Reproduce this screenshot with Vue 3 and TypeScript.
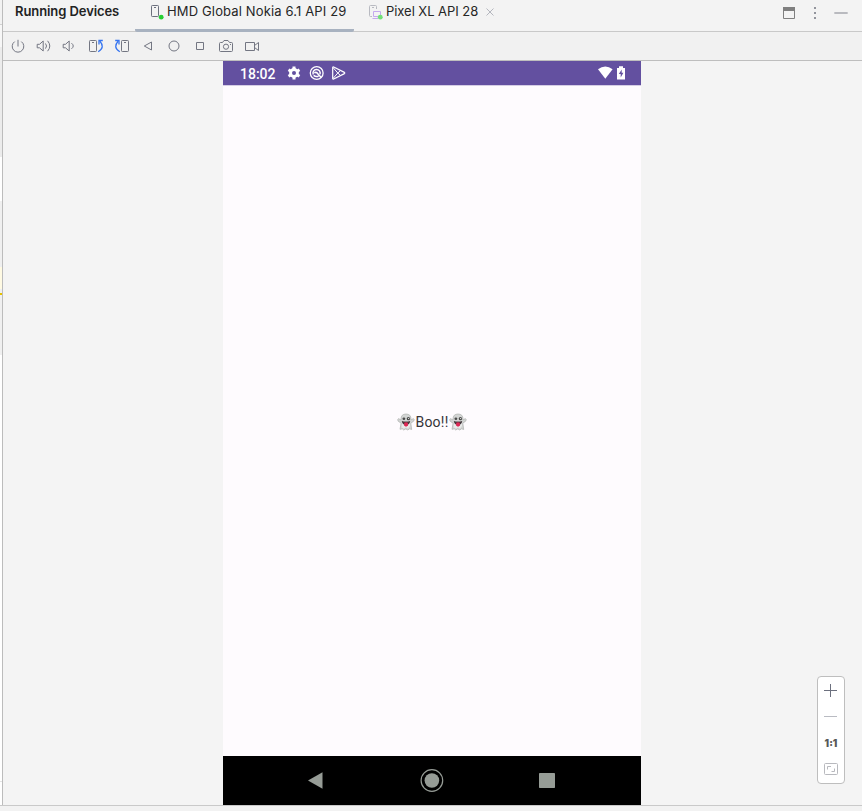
<script setup lang="ts">
import { ref } from 'vue'

interface Tool {
  name: string
  paths: string[]
  accent?: string[]
}

const tools: Tool[] = [
  { name: 'Power', paths: ['M9.7 9.6A5.8 5.8 0 1 0 16.3 9.6', 'M13 7.8V14.5'] },
  {
    name: 'Volume Up',
    paths: ['M6.2 12.3H8.5L12.2 9V19L8.5 15.8H6.2Z', 'M14.5 11.5Q16.6 14 14.5 16.6', 'M16.6 8.8Q21 14 16.6 19.2'],
  },
  { name: 'Volume Down', paths: ['M6.2 12.3H8.5L12.2 9V19L8.5 15.8H6.2Z', 'M14.5 11.2Q18 14 14.5 16.8'] },
  {
    name: 'Rotate Left',
    paths: ['M7.3 8.5H12.7Q13.5 8.5 13.5 9.3V18.7Q13.5 19.5 12.7 19.5H7.3Q6.5 19.5 6.5 18.7V9.3Q6.5 8.5 7.3 8.5Z', 'M9 10.5H11'],
    accent: ['M15.2 19.8Q22.5 15.5 16.8 9', 'M19.8 8.5H16V12.5'],
  },
  {
    name: 'Rotate Right',
    paths: ['M13.3 8.5H18.7Q19.5 8.5 19.5 9.3V18.7Q19.5 19.5 18.7 19.5H13.3Q12.5 19.5 12.5 18.7V9.3Q12.5 8.5 13.3 8.5Z', 'M15 10.5H17'],
    accent: ['M10.8 19.8Q3.5 15.5 9.2 9', 'M6.2 8.5H10V12.5'],
  },
  { name: 'Back', paths: ['M16.5 10V18L9.3 14Z'] },
  { name: 'Home', paths: ['M18 14A5 5 0 1 1 8 14A5 5 0 1 1 18 14Z'] },
  { name: 'Overview', paths: ['M9.5 10.5H16.5V17.5H9.5Z'] },
  {
    name: 'Screenshot',
    paths: [
      'M7.5 10.5H9.5L11 8.5H15L16.5 10.5H18.5Q19.5 10.5 19.5 11.5V18.5Q19.5 19.5 18.5 19.5H7.5Q6.5 19.5 6.5 18.5V11.5Q6.5 10.5 7.5 10.5Z',
      'M15.6 14.7A2.6 2.6 0 1 1 10.4 14.7A2.6 2.6 0 1 1 15.6 14.7Z',
      'M17 12.5H18',
    ],
  },
  { name: 'Record', paths: ['M6.5 10.5H15.5V18.5H6.5Z', 'M15.5 13.5L19.5 10.5V18.5L15.5 15.5'] },
]

const selected = ref<number>(0)
</script>

<template>
  <div class="window">
    <div class="workspace">
      <div class="gutter">
        <i class="g-head"></i><i class="g-a"></i><i class="g-b"></i><i class="g-c"></i>
        <i class="g-d"></i><i class="g-e"></i><i class="g-f"></i><i class="g-g"></i>
        <i class="g-h"></i><i class="g-i"></i>
      </div>
      <main class="panel">
        <header class="header">
          <span class="title">Running Devices</span>
          <button class="tab first" :class="{ active: selected === 0 }" @click="selected = 0">
            <svg class="device-icon" width="16" height="18" viewBox="0 0 16 18" fill="none">
              <path d="M4.3 3.5H9.7Q10.5 3.5 10.5 4.3V13.7Q10.5 14.5 9.7 14.5H4.3Q3.5 14.5 3.5 13.7V4.3Q3.5 3.5 4.3 3.5Z" stroke="#6c707e" />
              <path d="M6 5.5H8" stroke="#6c707e" />
              <circle cx="13.2" cy="15.2" r="2.4" fill="#27cf32" />
            </svg>
            <span class="label-a">HMD Global Nokia 6.1 API 29</span>
          </button>
          <button class="tab second" :class="{ active: selected === 1 }" @click="selected = 1">
            <svg class="device-icon" width="16" height="18" viewBox="0 0 16 18" fill="none">
              <path d="M4 14.5H2.5Q1.5 14.5 1.5 13.5V4.5Q1.5 3.5 2.5 3.5H7.5Q8.5 3.5 8.5 4.5V7" stroke="#b8bac1" />
              <path d="M4 5.5H6" stroke="#b8bac1" />
              <path d="M5.5 9.5H12.5V14.5H5.5ZM4.5 16.5H10" stroke="#c5a9ee" />
              <circle cx="12.3" cy="15.2" r="2.4" fill="#72df78" />
            </svg>
            <span class="label-b">Pixel XL API 28</span>
            <svg class="close" width="8" height="8" viewBox="0 0 8 8"><path d="M.5 .5L7.5 7.5M7.5 .5L.5 7.5" stroke="#b4b6be" /></svg>
          </button>
          <div class="window-actions">
            <svg width="68" height="14" viewBox="0 0 68 14" fill="none">
              <path d="M1.5 1.5H12.5V12.5H1.5Z" stroke="#7f7f7f" />
              <path d="M1 1H13V5H1Z" fill="#7f7f7f" />
              <path d="M32 1H34V3H32ZM32 6H34V8H32ZM32 11H34V13H32Z" fill="#92949c" />
              <path d="M52.3 6H65.7V8H52.3Z" fill="#b9babf" />
            </svg>
          </div>
        </header>
        <nav class="toolbar">
          <svg v-for="tool in tools" :key="tool.name" class="tool" viewBox="0 0 26 28" :aria-label="tool.name">
            <path v-for="d in tool.paths" :key="d" :d="d" />
            <path v-for="d in tool.accent ?? []" :key="d" :d="d" class="accent" />
          </svg>
        </nav>
        <section class="stage">
          <div class="device">
            <div class="status">
              <span class="clock">18:02</span>
              <svg class="notifications" width="60" height="16" viewBox="0 0 60 16" fill="none">
                <path d="M7 1.5V14.5M1.5 4.8L12.5 11.2M12.5 4.8L1.5 11.2" stroke="#fff" stroke-width="3" />
                <circle cx="7" cy="8" r="3.4" stroke="#fff" stroke-width="3" />
                <circle cx="7" cy="8" r="2" fill="#6350a0" />
                <circle cx="29.7" cy="8" r="6.4" stroke="#fff" stroke-width="1.3" />
                <path d="M26.3 9.5A3.6 3.6 0 1 1 33 9.2M27.3 7.8Q29.5 6.5 31 9L34.2 12.5M26.6 10.3Q29 12.3 31.6 11.1" stroke="#fff" stroke-width="1.5" />
                <path d="M45.7 2.7Q45.7 1.5 46.7 2L57.4 7.4Q58.2 8 57.4 8.6L46.7 14Q45.7 14.5 45.7 13.3Z" stroke="#fff" stroke-width="1.2" stroke-linejoin="round" />
                <path d="M46 2.5L50.8 8L46 13.5M50.8 8L53.4 5.6M50.8 8L53.4 10.4" stroke="#fff" stroke-width="1" />
              </svg>
              <svg class="signals" width="30" height="16" viewBox="0 0 30 16">
                <path d="M0 4.2Q7.3 -1.4 14.6 4.2L7.3 13.8Z" fill="#fff" />
                <path d="M19 3H21V1.3H25V3H27V14.5H19Z" fill="#fff" />
                <path d="M23.7 4.5L20.8 9H22.7V12.5L25.4 7.8H23.7Z" fill="#6350a0" />
              </svg>
            </div>
            <div class="app">
              <div class="greeting">
                <svg v-for="side in 2" :key="side" :class="['ghost', side === 1 ? 'left' : 'right']" width="18" height="18" viewBox="0 0 18 18">
                  <path d="M4 6Q4 1 9 1Q14 1 14 6V7L16.4 5.6Q18 6.6 16.6 8.2L13.8 10.2L14.7 16.5L12.5 15.8L10.8 17L8.8 15.9L6.7 17L5.3 15.8L3 16.3L4.1 10.2L1.2 8.2Q0 6.6 1.5 5.6L4 7Z" fill="#d3d5d4" stroke="#adb0ae" stroke-width=".7" />
                  <path d="M5 8.5H13V13L11 15.5L9 14.5L7 15.5L4.7 14.5Z" fill="#e9e9e9" />
                  <ellipse cx="6.9" cy="5.8" rx="1.4" ry="1.3" fill="#4b4b4b" />
                  <ellipse cx="11.4" cy="5.7" rx="1.7" ry="1.6" fill="#4b4b4b" />
                  <circle cx="11.6" cy="5.5" r=".6" fill="#eee" />
                  <path d="M4.8 7.9Q9 9 13.2 7.9Q12.8 11.8 9 11.8Q5.3 11.8 4.8 7.9Z" fill="#44383c" />
                  <path d="M7.2 9.8Q9 8.8 10.9 9.8V12.3Q9 15 7.2 12.3Z" fill="#df2855" />
                </svg>
                <span class="boo">Boo!!</span>
              </div>
            </div>
            <div class="navigation">
              <svg width="418" height="49" viewBox="0 0 418 49">
                <path d="M85 24.5L99.5 16.2V32.8Z" fill="#969c96" />
                <circle cx="208.9" cy="24.5" r="10.8" fill="none" stroke="#969c96" stroke-width="1.2" />
                <circle cx="208.9" cy="24.5" r="7.3" fill="#969c96" />
                <rect x="316" y="17" width="16" height="15" rx=".7" fill="#969c96" />
              </svg>
            </div>
          </div>
          <div class="zoom">
            <svg width="26" height="26" viewBox="0 0 26 26"><path d="M6 13.5H19M12.5 7V20" stroke="#6c707e" /></svg>
            <svg width="26" height="26" viewBox="0 0 26 26"><path d="M6 13.5H19" stroke="#b9bbc2" /></svg>
            <span class="ratio">1:1</span>
            <svg width="26" height="26" viewBox="0 0 26 26" fill="none" stroke="#b8b9be"><rect x="6.5" y="8.5" width="13" height="11" rx="1" /><path d="M9.5 14.5V11.5H13M13.5 16.5H16.5V13.5" /></svg>
          </div>
        </section>
      </main>
    </div>
    <footer class="footer"></footer>
  </div>
</template>

<style>
body {
  margin: 0;
  overflow: hidden;
}
</style>

<style scoped>
.window {
  display: flex;
  flex-direction: column;
  width: 862px;
  height: 811px;
  background: #f2f2f2;
  font-family: Inter, sans-serif;
}
.workspace {
  display: flex;
  height: 805px;
}
.gutter {
  display: flex;
  flex-direction: column;
  width: 2px;
  background: #fff;
}
.gutter i { flex: none; }
.g-head { height: 24px; background: #f2f2f2; border-bottom: 1px solid #d1d1d1; }
.g-a { height: 22px; background: #f7f7f7; }
.g-b { height: 110px; background: #ececec; }
.g-c { height: 44px; background: #fff; }
.g-d { height: 66px; background: #f0f0f0; }
.g-e { height: 22px; background: #fffae3; }
.g-f { height: 4px; background: #f0f0f0; }
.g-g { height: 2px; background: #e6c200; }
.g-h { height: 60px; background: #f0f0f0; }
.g-i { height: 426px; border-bottom: 1px solid #e4e4e4; }
.panel {
  display: flex;
  flex: 1;
  flex-direction: column;
  border-left: 1px solid #bcbcbc;
}
.header {
  display: flex;
  height: 31px;
  box-sizing: content-box;
  background: #f3f3f3;
  border-bottom: 1px solid #c9c9c9;
}
.title {
  width: 120px;
  padding-left: 12px;
  font-size: 13px;
  font-weight: 600;
  line-height: 23px;
  letter-spacing: -.08px;
  color: #222;
  white-space: nowrap;
}
.tab {
  display: flex;
  box-sizing: border-box;
  height: 32px;
  padding: 0;
  font: 13px/23px Inter, sans-serif;
  color: #262626;
  white-space: nowrap;
  background: none;
  border: 0;
  border-bottom: 3px solid transparent;
}
.tab.active {
  border-bottom-color: #a8b2c0;
  border-radius: 2px;
}
.first { width: 219px; padding-left: 13px; }
.second { padding-left: 14px; }
.device-icon { flex: none; margin-top: 2px; margin-right: 3px; }
.second .device-icon { margin-right: 2px; }
.label-a { letter-spacing: .14px; }
.label-b { letter-spacing: -.05px; }
.close { margin-top: 8px; margin-left: 8px; }
.window-actions { margin-top: 4px; margin-right: 12px; margin-left: auto; }
.toolbar {
  display: flex;
  height: 28px;
  padding-left: 2px;
  background: #f1f1f1;
  border-bottom: 1px solid #bebebe;
}
.tool {
  width: 26px;
  height: 28px;
  fill: none;
  stroke: #737682;
}
.accent { stroke: #3574f0; stroke-width: 1.3; }
.stage {
  display: flex;
  flex: 1;
  background: #f4f4f4;
}
.device {
  display: flex;
  flex-direction: column;
  width: 418px;
  margin-left: 220px;
}
.status {
  display: flex;
  align-items: center;
  height: 24px;
  color: #fff;
  background: #6350a0;
  border-bottom: 1px solid #d5cde5;
}
.clock {
  width: 47px;
  padding-top: 2px;
  padding-left: 17px;
  font: 500 14px/22px Roboto, sans-serif;
}
.signals { margin-right: 13px; margin-left: auto; }
.app {
  display: flex;
  flex: 1;
  align-items: center;
  justify-content: center;
  background: #fefbfe;
}
.greeting {
  display: flex;
  align-items: center;
  color: #353338;
  font: 14px/20px Roboto, sans-serif;
}
.boo { order: 1; padding-top: 1px; letter-spacing: .25px; }
.ghost { margin-top: 1px; }
.right { order: 2; }
.navigation { height: 49px; background: #000; }
.zoom {
  display: flex;
  flex-direction: column;
  align-self: flex-end;
  box-sizing: border-box;
  width: 28px;
  height: 108px;
  margin: 0 17px 21px auto;
  background: #fff;
  border: 1px solid #bebebe;
  border-radius: 4px;
}
.ratio {
  height: 26px;
  font-size: 10px;
  font-weight: 900;
  line-height: 28px;
  color: #585858;
  text-align: center;
}
.footer {
  height: 5px;
  border-top: 1px solid #c9c9c9;
  background: #f2f2f2;
}
</style>
